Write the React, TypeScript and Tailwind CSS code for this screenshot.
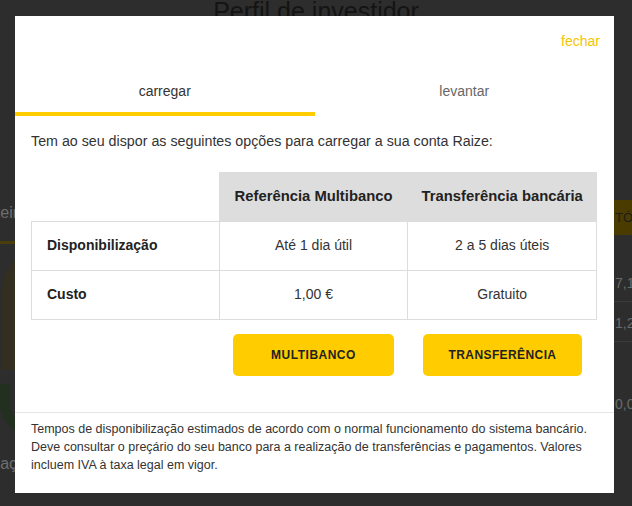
import React from 'react';

const font = { fontFamily: '"Liberation Sans", Arial, sans-serif' };

const rows = [
  { label: 'Disponibilização', mb: 'Até 1 dia útil', tr: '2 a 5 dias úteis' },
  { label: 'Custo', mb: '1,00 €', tr: 'Gratuito' },
];

export default function App() {
  return (
    <div className="relative h-[506px] w-[632px] overflow-hidden bg-[#2d2d2d]" style={font}>
      {/* page behind the modal (dimmed) */}
      <div className="flex flex-col">
        <h1 className="-mt-[3px] text-center text-[25px] leading-[28px] text-[#141414]">Perfil de investidor</h1>
        <div className="grid grid-cols-[15px_1fr_18px]">
          <div className="overflow-hidden">
            <div className="-ml-[30px] mt-[178px] w-[120px] text-[16px] leading-[20px] text-[#6e6e6e]">Carteira</div>
            <div className="mt-[18px] h-[3px] w-full bg-[#4a3d0c]" />
            <div className="ml-[2px] mt-[6px] h-[120px] w-[40px] rounded-tl-[60px] bg-[#332f20]" />
            <div className="mt-[14px] h-[50px] w-[30px] rounded-bl-[40px] border-b-[10px] border-l-[10px] border-[#22301f]" />
            <div className="-ml-[31px] mt-[20px] w-[120px] text-[16px] leading-[20px] text-[#6e6e6e]">Alocação</div>
          </div>
          <div />
          <div className="overflow-hidden">
            <div className="mt-[175px] flex h-[35px] w-[80px] items-center bg-[#4a3c00] pl-[1px] text-[13px] text-[#1c1c1c]">TÓRICO</div>
            <div className="mt-[38px] w-[80px] border-b border-[#3a3a3a] pb-[8px] pl-[1px] text-[14px] leading-[20px] text-[#6a6a6a]">7,14 €</div>
            <div className="mt-[11px] w-[80px] border-b border-[#3a3a3a] pb-[8px] pl-[1px] text-[14px] leading-[20px] text-[#6a6a6a]">1,20 €</div>
            <div className="mt-[52px] w-[80px] pl-[1px] text-[14px] leading-[20px] text-[#6a6a6a]">0,00 €</div>
          </div>
        </div>
      </div>

      {/* modal */}
      <div className="absolute inset-0 pl-[15px] pt-[16px]">
        <div className="flex h-[477px] w-[599px] flex-col bg-white">
          <div className="pr-[14px] pt-[15px] text-right text-[14px] leading-[20px] text-[#f5c400]">fechar</div>

          <div className="grid grid-cols-2">
            <div className="border-b-4 border-[#ffcc00] pb-[11px] pt-[30px] text-center text-[14px] leading-[20px] text-[#333]">carregar</div>
            <div className="pb-[15px] pt-[30px] text-center text-[14px] leading-[20px] text-[#666]">levantar</div>
          </div>

          <div className="px-[16px]">
            <p className="mt-[15px] text-[14.25px] leading-[20px] text-[#333]">
              Tem ao seu dispor as seguintes opções para carregar a sua conta Raize:
            </p>

            <table className="mt-[21px] w-[566px] border-collapse text-[14px] text-[#222]">
              <thead>
                <tr className="h-[49px]">
                  <th className="w-[188px]" />
                  <th className="w-[189px] bg-[#dddddd] text-[14.8px] font-bold">Referência Multibanco</th>
                  <th className="w-[189px] bg-[#dddddd] text-[14.8px] font-bold">Transferência bancária</th>
                </tr>
              </thead>
              <tbody>
                {rows.map((r) => (
                  <tr key={r.label} className="h-[49px]">
                    <td className="border border-[#dddddd] pl-[15px] font-bold">{r.label}</td>
                    <td className="border border-[#dddddd] text-center text-[#333]">{r.mb}</td>
                    <td className="border border-[#dddddd] text-center text-[#333]">{r.tr}</td>
                  </tr>
                ))}
              </tbody>
            </table>

            <div className="mt-[14px] grid grid-cols-[188px_189px_189px]">
              <div />
              <div className="flex justify-center">
                <button className="h-[42px] w-[161px] rounded-[5px] bg-[#ffcc00] text-[12px] font-bold tracking-[0.5px] text-[#222]">
                  MULTIBANCO
                </button>
              </div>
              <div className="flex justify-center">
                <button className="h-[42px] w-[159px] rounded-[5px] bg-[#ffcc00] text-[12px] font-bold tracking-[0.4px] text-[#222]">
                  TRANSFERÊNCIA
                </button>
              </div>
            </div>
          </div>

          <div className="mt-[36px] whitespace-nowrap border-t border-[#e6e6e6] px-[16px] pt-[7px] text-[12.5px] leading-[18px] text-[#333]">
            Tempos de disponibilização estimados de acordo com o normal funcionamento do sistema bancário.
            <br />
            Deve consultar o preçário do seu banco para a realização de transferências e pagamentos. Valores
            <br />
            incluem IVA à taxa legal em vigor.
          </div>
        </div>
      </div>
    </div>
  );
}
